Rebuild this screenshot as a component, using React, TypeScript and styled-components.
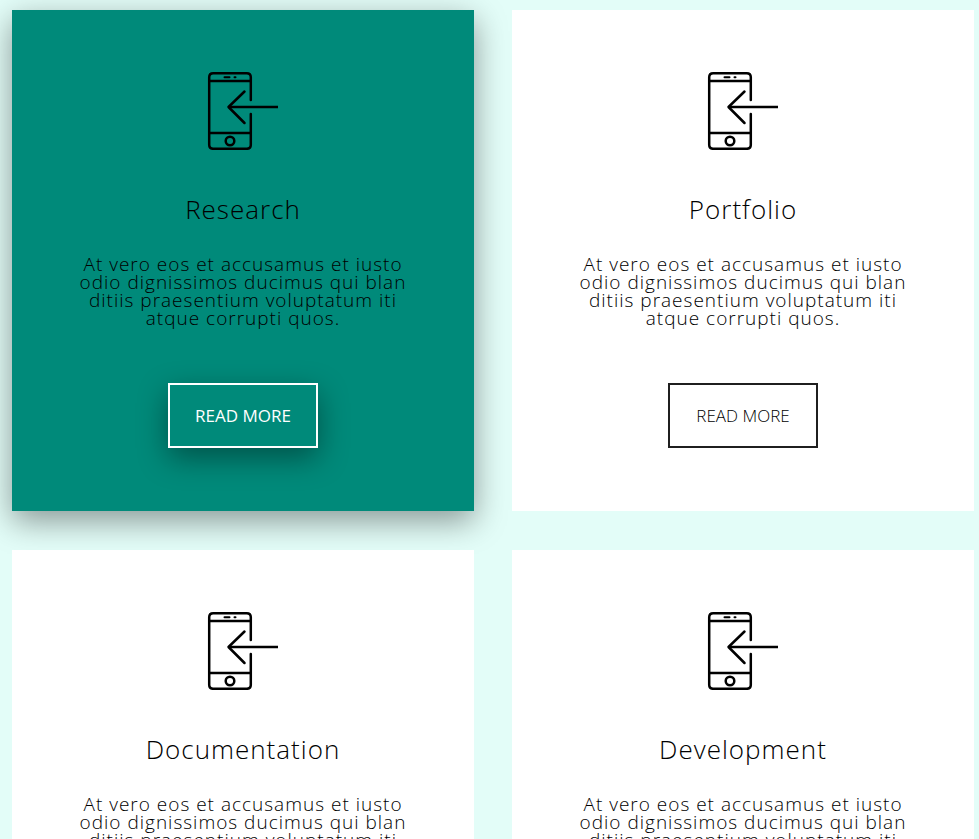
import React from "react";
import styled, { createGlobalStyle } from "styled-components";

const GlobalStyle = createGlobalStyle`
  * { box-sizing: border-box; }
  body {
    margin: 0;
    background: #e3fdf8;
    font-family: "Open Sans", sans-serif;
    overflow-x: hidden;
    scrollbar-width: none;
  }
`;

const Grid = styled.main`
  display: grid;
  grid-template-columns: 1fr 1fr;
  gap: 39px 38px;
  padding: 10px 5px 39px 12px;
`;

const Card = styled.article<{ $active: boolean }>`
  display: flex;
  flex-direction: column;
  align-items: center;
  padding: 60px 62px 63px;
  text-align: center;
  color: #000000;
  background: ${(p) => (p.$active ? "#008a7a" : "#ffffff")};
  box-shadow: ${(p) => (p.$active ? "0 10px 30px rgba(0, 0, 0, 0.4)" : "none")};
`;

const Icon = styled.svg`
  width: 80px;
  height: 80px;
`;

const Title = styled.h2`
  margin: 40px 0 0;
  font-size: 26px;
  font-weight: 300;
  line-height: 38px;
  letter-spacing: 1px;
`;

const Text = styled.p`
  margin: 27px 0 0;
  font-size: 19px;
  font-weight: 300;
  line-height: 18px;
  letter-spacing: 1px;
`;

const Button = styled.button<{ $active: boolean }>`
  margin-top: 56px;
  width: 150px;
  height: 65px;
  padding: 0;
  font: ${(p) => (p.$active ? 400 : 300)} 17px "Open Sans", sans-serif;
  text-transform: uppercase;
  background: transparent;
  color: ${(p) => (p.$active ? "#ffffff" : "#000000")};
  border: 2px solid ${(p) => (p.$active ? "#ffffff" : "#1f1f1f")};
  box-shadow: ${(p) => (p.$active ? "0 10px 30px rgba(0, 0, 0, 0.4)" : "none")};
`;

const PhoneIcon = () => (
  <Icon viewBox="0 0 80 80" fill="none" stroke="#000" strokeWidth="2.5" aria-hidden="true">
    <path
      strokeLinecap="round"
      d="M47.800 30V7.200Q47.800 3.200 43.800 3.200H10.200Q6.200 3.200 6.200 7.200V74.800Q6.200 78.800 10.200 78.800H43.800Q47.800 78.800 47.800 74.800V44"
    />
    <path d="M6.200 11H47.800M6.200 63H47.800" />
    <path strokeLinecap="round" strokeWidth="2" d="M21.500 7.200H26.500M31.500 7.200H32.500" />
    <circle cx="27" cy="71" r="4.300" />
    <path d="M75 37H26" />
    <path strokeLinecap="round" strokeLinejoin="round" d="M41.500 21.500L25.500 37L41.500 53" />
  </Icon>
);

const titles = ["Research", "Portfolio", "Documentation", "Development"];

export default function App() {
  return (
    <>
      <GlobalStyle />
      <Grid>
        {titles.map((title, i) => (
          <Card key={title} $active={i === 0}>
            <PhoneIcon />
            <Title>{title}</Title>
            <Text>
              At vero eos et accusamus et iusto odio dignissimos ducimus qui blan
              ditiis praesentium voluptatum iti atque corrupti quos.
            </Text>
            <Button type="button" $active={i === 0}>Read more</Button>
          </Card>
        ))}
      </Grid>
    </>
  );
}
